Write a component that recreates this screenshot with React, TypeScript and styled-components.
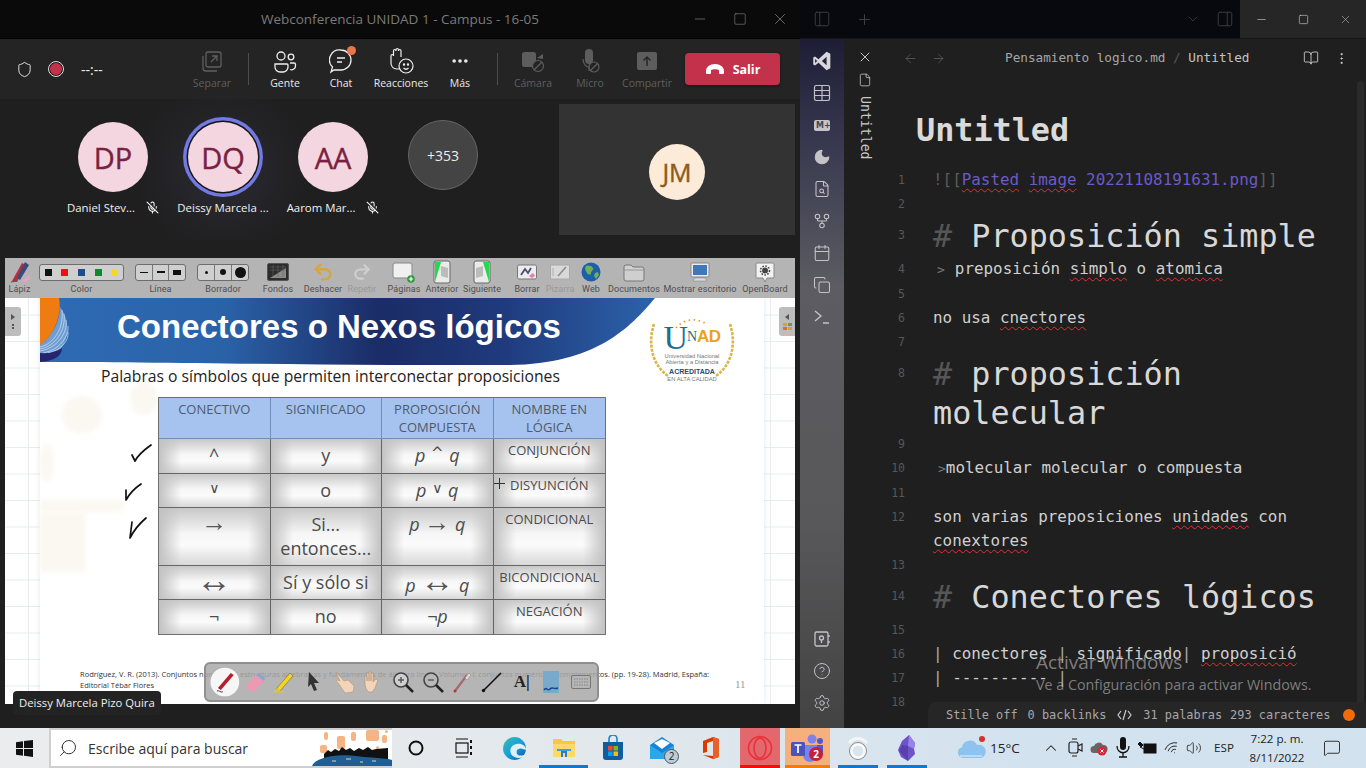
import React from "react";
import styled, { createGlobalStyle } from "styled-components";
import {
  ArrowLeft, ArrowRight, BookOpen, Calendar, ChevronDown, ChevronUp, CircleHelp, Copy, Ellipsis, EllipsisVertical,
  File, FileSearch, GitFork, MicOff, Minus, Moon, PanelLeft, PanelRight, Plus, Search, Settings, Shield,
  Square, Table, Undo2, Redo2, Volume2, Wifi, X, MessageSquare,
} from "lucide-react";

const MONO = `"DejaVu Sans Mono", "Liberation Mono", monospace`;
const SANS = `"Open Sans", "Noto Sans", "Liberation Sans", sans-serif`;

const Global = createGlobalStyle`
  html, body { margin: 0; padding: 0; background: #1f1f1f; overflow: hidden; }
  * { box-sizing: border-box; }
`;

const Screen = styled.div`
  width: 1366px; height: 768px; display: flex; flex-direction: column; overflow: hidden; position: relative;
  font-family: ${SANS};
`;
const Windows = styled.div`display: flex; height: 728px;`;
const Spaced = styled.span<{ $ml?: number; $mt?: number }>`display: flex; flex: none; margin-left: ${(p) => p.$ml ?? 0}px; margin-top: ${(p) => p.$mt ?? 0}px;`;

/* ---------- Teams ---------- */
const Teams = styled.section`width: 800px; display: flex; flex-direction: column; background: #1f1f1f;`;
const TeamsTitle = styled.header`
  height: 39px; flex: none; background: #0a0a0a; position: relative; display: flex; align-items: center; justify-content: center;
  color: #7b7b7b; font-size: 13.5px; border-bottom: 1px solid #000;
`;
const WinControls = styled.div`
  position: absolute; right: 0; top: 0; height: 38px; display: flex; align-items: center; color: #8a8a8a;
`;
const WinControl = styled.span`width: 40px; display: flex; justify-content: center;`;
const MeetBar = styled.div`height: 60px; flex: none; background: #242424; display: flex; align-items: flex-start;`;
const MeetStatus = styled.div`width: 184px; height: 60px; display: flex; align-items: center; padding-left: 16px; color: #eee; font-size: 14px;`;
const RecDot = styled.span`
  width: 16px; height: 16px; border-radius: 50%; background: #c4314b; border: 2px solid #1f1f1f; outline: 1.5px solid #ddd; outline-offset: -1px;
  margin-left: 15px; margin-right: 17px;
`;
const MeetItem = styled.div<{ $w: number; $off?: boolean }>`
  width: ${(p) => p.$w}px; height: 60px; flex: none; display: flex; flex-direction: column; align-items: center; position: relative;
  padding-top: 8px; color: ${(p) => (p.$off ? "#5f5f5f" : "#eaeaea")};
`;
const MeetIcon = styled.div`height: 28px; display: flex; align-items: center; justify-content: center; position: relative;`;
const MeetLabel = styled.span`font-size: 10.5px; line-height: 14px; margin-top: 1px; white-space: nowrap;`;
const MeetDivider = styled.span<{ $before: number; $after: number }>`width: 1px; height: 32px; background: #4d4d4d; margin: 14px ${(p) => p.$after}px 0 ${(p) => p.$before}px; flex: none;`;
const Badge = styled.span`position: absolute; width: 9px; height: 9px; border-radius: 50%; background: #e97548; right: -3px; top: -1px;`;
const Leave = styled.button`
  width: 95px; height: 32px; margin: 14px 0 0 10px; border: 0; border-radius: 4px; background: #c4314b; color: #fff; font: 700 12.5px ${SANS};
  display: flex; align-items: center; justify-content: center; gap: 8px; box-shadow: 0 1px 3px #0006;
`;
const Participants = styled.div`height: 141px; flex: none; display: flex; padding: 5px 5px 5px 58px; background: radial-gradient(circle 90px at 223px 70px, #2a2a34, #1f1f1f);`;
const Person = styled.div`width: 110px; display: flex; flex-direction: column; align-items: center; padding-top: 18px;`;
const Avatar = styled.div<{ $active?: boolean; $more?: boolean }>`
  width: 70px; height: 70px; border-radius: 50%; display: flex; align-items: center; justify-content: center; flex: none;
  background: ${(p) => (p.$more ? "#444" : "#f3d6e0")}; color: ${(p) => (p.$more ? "#eee" : "#7a1f42")};
  font-size: ${(p) => (p.$more ? "14px" : "29px")};
  -webkit-text-stroke: ${(p) => (p.$more ? "0" : ".4px")};
  margin-top: ${(p) => (p.$more ? "-2px" : "0")};
  border: ${(p) => (p.$more ? "1px solid #666" : "0")};
  box-shadow: ${(p) => (p.$active ? "0 0 0 1.5px #151515, 0 0 0 5px #7279e3" : "none")};
`;
const NameRow = styled.div`display: flex; align-items: center; gap: 11px; margin-top: 7px; color: #f2f2f2; font-size: 11.4px; white-space: nowrap; height: 16px;`;
const Tile = styled.div`
  width: 236px; height: 131px; margin-left: 61px; background: #333; display: flex; align-items: center; justify-content: center;
`;
const TileAvatar = styled.div`width: 56px; height: 56px; border-radius: 50%; background: #fcebd8; color: #8e5a20; font-size: 25px; -webkit-text-stroke: .4px; display: flex; align-items: center; justify-content: center; margin-top: 4px;`;

const Share = styled.div`flex: 1; padding: 18px 5px 24px; display: flex; flex-direction: column; position: relative;`;
const BoardBar = styled.div`height: 40px; flex: none; background: #b4b4b4; display: flex; align-items: flex-start; color: #4a4a4a; position: relative;`;
const BoardItem = styled.div<{ $w: number; $off?: boolean; $ml?: number }>`
  width: ${(p) => p.$w}px; flex: none; height: 40px; display: flex; flex-direction: column; align-items: center; color: ${(p) => (p.$off ? "#999" : "#4f4f4f")};
  margin-left: ${(p) => p.$ml ?? 0}px;
`;
const BoardIcon = styled.div`height: 24px; width: 100%; margin-top: 2px; display: flex; align-items: center; justify-content: center;`;
const BoardLabel = styled.span`font: 9px/11px Roboto, ${SANS}; white-space: nowrap; letter-spacing: .1px;`;
const Pill = styled.div`height: 17px; display: flex; align-items: center; border: 1px solid #6d6d6d; border-radius: 3px; background: #cfcfcf; width: 100%;`;
const PillCell = styled.span<{ $line?: boolean }>`flex: 1; height: 100%; display: flex; align-items: center; justify-content: center; border-left: ${(p) => (p.$line ? "1px solid #777" : "0")};`;
const Swatch = styled.i<{ $c: string }>`width: 7px; height: 7px; background: ${(p) => p.$c}; display: block;`;
const Stroke = styled.i<{ $h: number; $w: number }>`width: ${(p) => p.$w}px; height: ${(p) => p.$h}px; background: #111; display: block;`;
const Dot = styled.i<{ $s: number }>`width: ${(p) => p.$s}px; height: ${(p) => p.$s}px; border-radius: 50%; background: #111; display: block;`;

const Stage = styled.div`
  flex: 1; position: relative; padding-left: 35px; overflow: hidden; background-color: #fff;
  background-image: linear-gradient(#e9ecec 1px, transparent 1px), linear-gradient(90deg, #e9ecec 1px, transparent 1px);
  background-size: 26.5px 26.5px; background-position: 23px 16.5px;
`;
const Slide = styled.div`width: 724px; height: 100%; background: #fff; display: flex; flex-direction: column; position: relative; box-shadow: 0 0 5px #b4c2d866;`;
const Banner = styled.div`height: 67px; position: relative; flex: none;`;
const BannerArt = styled.svg`position: absolute; inset: 0; width: 100%; height: 100%;`;
const BannerTitle = styled.h1`
  position: relative; margin: 0; padding: 10px 0 0 77px; color: #fff; font: 700 33px/38px "Liberation Sans", Arial, sans-serif; white-space: nowrap;
`;
const Subtitle = styled.p`margin: 1px 0 0 61px; font-size: 15.7px; line-height: 20px; color: #222; white-space: nowrap; position: relative; z-index: 1;`;
const PropTable = styled.div`
  margin: 11px 0 0 118px; width: 448px; display: grid; grid-template-columns: repeat(4, 1fr); grid-template-rows: 41px 35px 34px 58px 34px 34px;
  border: 1px solid #6f6f6f; flex: none; color: #4b4b4b; position: relative; z-index: 1;
`;
const Head = styled.div`
  background: #a6c3ef; border-right: 1px solid #6f8fb8; border-bottom: 1px solid #6f8fb8; text-align: center; font-size: 13px; line-height: 18px; padding-top: 2px; color: #4f5a6b;
  &:nth-child(4) { border-right: 0; }
`;
const Cell = styled.div<{ $small?: boolean; $italic?: boolean; $last?: boolean }>`
  background: linear-gradient(90deg, #c2c2c2, #e8e8e800 20%, #e8e8e800 80%, #c2c2c2), linear-gradient(180deg, #c8c8c8, #f6f6f6 45%, #fbfbfb 65%, #d8d8d8);
  border-bottom: 1px solid #666; border-right: ${(p) => (p.$last ? "0" : "1px solid #666")};
  text-align: center; font-size: ${(p) => (p.$small ? "13px" : "18px")}; line-height: ${(p) => (p.$small ? "16px" : "24px")};
  padding-top: ${(p) => (p.$small ? "3px" : "4px")}; font-style: ${(p) => (p.$italic ? "italic" : "normal")}; white-space: nowrap;
  &:nth-last-child(-n + 4) { border-bottom: 0; }
`;
const Arrow = styled.span<{ $s: number }>`font: 400 ${(p) => p.$s}px/20px "Liberation Sans", "DejaVu Sans", sans-serif; font-style: normal; color: #555;`;
const Wedge = styled.span<{ $s: number }>`font: 400 ${(p) => p.$s}px/11px "DejaVu Sans", sans-serif; font-style: normal; vertical-align: 4px; margin: 0 1px;`;
const Citation = styled.p`position: absolute; left: 75px; top: 371px; margin: 0; width: 640px; font-size: 7.5px; line-height: 11px; color: #333;`;
const PageNo = styled.span`position: absolute; left: 730px; top: 380px; font: 11px "Liberation Serif", serif; color: #999;`;
const Ink = styled.svg`position: absolute; left: 115px; top: 140px; z-index: 1;`;
const Cursor = styled.svg`position: absolute; left: 489px; top: 180px; z-index: 1;`;
const Fade = styled.div<{ $x: number; $y: number; $w: number; $h: number; $round?: boolean }>`
  position: absolute; left: ${(p) => p.$x}px; top: ${(p) => p.$y}px; width: ${(p) => p.$w}px; height: ${(p) => p.$h}px; background: #fbf8f2;
  border-radius: ${(p) => (p.$round ? "50%" : "0")}; filter: blur(2px);
`;
const SideTab = styled.div<{ $right?: boolean }>`
  position: absolute; top: 9px; ${(p) => (p.$right ? "right: 0;" : "left: 0;")} width: 16px; height: 29px; background: #bdbdbd;
  border-radius: ${(p) => (p.$right ? "3px 0 0 3px" : "0 3px 3px 0")}; display: flex; align-items: center; justify-content: center; z-index: 1;
`;
const Logo = styled.div`position: absolute; left: 643px; top: 20px; width: 88px; height: 64px; text-align: center; color: #444;`;
const LogoArt = styled.svg`position: absolute; inset: 0;`;
const LogoMark = styled.div`position: relative; font: 400 34px/30px "Liberation Serif", serif; color: #1f6e8c; margin-top: 4px; letter-spacing: -1px; white-space: nowrap;`;
const LogoN = styled.span`font-size: 14px; letter-spacing: 0; vertical-align: 8px;`;
const LogoAccent = styled.span`font: 700 17px "Liberation Sans", sans-serif; color: #e9a21b; letter-spacing: -.5px; vertical-align: 7px;`;
const LogoText = styled.div<{ $strong?: boolean; $gap?: boolean }>`
  position: relative; font: ${(p) => (p.$strong ? 700 : 400)} ${(p) => (p.$strong ? 7 : 5.8)}px/6.2px "Liberation Sans", sans-serif; color: ${(p) => (p.$strong ? "#1a4d7a" : "#777")};
  margin-top: ${(p) => (p.$gap ? "4px" : "0")};
`;
const FloatBar = styled.div`
  position: absolute; left: 199px; top: 364px; width: 395px; height: 40px; border-radius: 6px; border: 2px solid #8f8f8f; background: #a8a8a8d9;
  display: flex; align-items: center; padding-left: 4px; z-index: 3;
`;
const FloatTool = styled.span`width: 29.7px; height: 36px; flex: none; display: flex; align-items: center; justify-content: center; font: 700 17px "Liberation Serif", serif; color: #222;`;
const NameTag = styled.div`
  position: absolute; left: 13px; top: 691px; height: 24px; padding: 0 6px; background: #232323; border-radius: 4px; color: #f0f0f0; font-size: 11.3px; line-height: 24px; z-index: 4; white-space: nowrap;
`;

/* ---------- Obsidian ---------- */
const Obsidian = styled.section`width: 566px; display: flex; flex-direction: column; background: #1f1f1f; color: #dcdcdc; position: relative;`;
const ObsTitle = styled.div`height: 39px; flex: none; display: flex; background: #262626; border-bottom: 1px solid #161616;`;
const ObsTabs = styled.div`width: 440px; background: #08080f; display: flex; align-items: center; color: #3e3e48; padding-left: 13px;`;
const ObsCtl = styled.div`flex: 1; display: flex; align-items: center; color: #c8c8c8;`;
const ObsCtlItem = styled.span`width: 42px; display: flex; justify-content: center;`;
const ObsBody = styled.div`flex: 1; display: flex; min-height: 0;`;
const Ribbon = styled.nav`
  width: 44px; flex: none; display: flex; flex-direction: column; align-items: center; padding: 6px 0 9px; color: #c4c4c8;
  background: linear-gradient(180deg, #1d1e35 0%, #36374e 14%, #5c5c62 36%, #58585a 70%, #434343 100%);
`;
const RibbonSlot = styled.span`height: 32px; display: flex; align-items: center; justify-content: center; flex: none;`;
const Md = styled.span`background: #c4c4c8; color: #45454f; border-radius: 2px; font: 700 8px/11px "DejaVu Sans", sans-serif; padding: 0 2px; width: 16px; text-align: center;`;
const RibbonSpacer = styled.span`flex: 1;`;
const TabRail = styled.div`width: 41px; flex: none; display: flex; flex-direction: column; align-items: center; padding-top: 10px; color: #d0d0d0;`;
const VerticalLabel = styled.span`writing-mode: vertical-rl; font: 13.2px/16px ${MONO}; margin-top: 9px; color: #c8c8c8;`;
const Pane = styled.div`flex: 1; min-width: 0; position: relative; overflow: hidden; display: flex; flex-direction: column;`;
const PaneHead = styled.div`height: 38px; flex: none; display: flex; align-items: center; color: #5d5d5d; position: relative; padding-left: 18px;`;
const Crumb = styled.div`font: 12.7px/16px ${MONO}; color: #a6a6a6; margin-left: 59px; white-space: nowrap;`;
const CrumbSep = styled.span`color: #555;`;
const CrumbEnd = styled.span`color: #c4c4c4;`;
const PaneTools = styled.div`margin-left: auto; display: flex; gap: 15px; align-items: center; color: #d0d0d0; padding-right: 17px;`;
const Doc = styled.div`flex: 1; overflow: hidden;`;
const DocTitle = styled.h2`margin: 33px 0 18px 31px; font: 700 31.8px/40px ${MONO}; color: #dadada;`;
const Row = styled.div<{ $heading?: boolean }>`
  display: grid; grid-template-columns: 20px 1fr; column-gap: 28px; width: 460px; padding-right: 10px;
  min-height: ${(p) => (p.$heading ? "41px" : "24px")};
`;
const Gutter = styled.span<{ $heading?: boolean }>`text-align: right; font: 11.5px/${(p) => (p.$heading ? "38.5px" : "24px")} ${MONO}; color: #575757;`;
const LineText = styled.div<{ $heading?: boolean }>`
  font: ${(p) => (p.$heading ? "31.8px/38.5px" : "15.9px/24px")} ${MONO}; color: ${(p) => (p.$heading ? "#d8d8d8" : "#d0d0d0")}; min-width: 0;
  padding-top: ${(p) => (p.$heading ? "1px" : "0")};
`;
const NoWrap = styled.span`white-space: nowrap;`;
const Hash = styled.span`color: #565656;`;
const Muted = styled.span<{ $l: number; $r: number }>`color: #777; margin: 0 ${(p) => p.$r}px 0 ${(p) => p.$l}px; font-size: 13px;`;
const Faint = styled.span`color: #5b5b5b;`;
const Link = styled.span`color: #6a5bc6;`;
const Typo = styled.span`text-decoration: underline wavy #d33; text-decoration-thickness: 1px; text-underline-offset: 3px;`;
const Pipe = styled.span`color: #aaa;`;
const Status = styled.div`
  position: absolute; right: 0; bottom: 0; width: 438px; height: 26px; background: #262626; border-radius: 8px 0 0 0; display: flex; align-items: center;
  padding-left: 18px; font: 11.9px/14px ${MONO}; color: #a8a8a8; white-space: nowrap;
`;
const StatusGap = styled.span<{ $w: number }>`width: ${(p) => p.$w}px; flex: none; display: flex; justify-content: center; color: #ccc;`;
const OrangeDot = styled.i`width: 12px; height: 12px; border-radius: 50%; background: #f26a0a; position: absolute; right: 11px; top: 7px;`;
const Scroll = styled.i`position: absolute; right: 2px; top: 42px; width: 7px; height: 640px; background: #2a2a2a; border-radius: 4px;`;
const Activate = styled.div`position: absolute; left: 1036px; top: 650px; color: #bdbdbd9c; z-index: 5; font-size: 14.3px; line-height: 20px; pointer-events: none;`;
const ActivateBig = styled.div`font-size: 19px; line-height: 24px;  margin-bottom: 1px;`;

/* ---------- Taskbar ---------- */
const Taskbar = styled.footer`height: 40px; flex: none; display: flex; align-items: stretch; background: linear-gradient(90deg, #ebecee 0%, #e2e8ec 45%, #d3e2ef 75%, #d3e2ef 100%); color: #222;`;
const Slot = styled.div<{ $w: number; $ml?: number; $bg?: string; $line?: string }>`
  width: ${(p) => p.$w}px; flex: none; margin-left: ${(p) => p.$ml ?? 0}px; background: ${(p) => p.$bg ?? "transparent"};
  border-bottom: 3px solid ${(p) => p.$line ?? "transparent"}; padding-top: 3px; display: flex; align-items: center; justify-content: center; position: relative;
`;
const SearchBox = styled.div`
  width: 343px; margin-left: 1px; flex: none; background: #fff; border: 2px solid #cfcfcf; border-right: 0; display: flex; align-items: center; padding-left: 7px; position: relative; overflow: hidden;
  font-size: 14px; color: #333; gap: 10px;
`;
const SearchGlass = styled(Search)`transform: scaleX(-1);`;
const SearchArt = styled.svg`position: absolute; right: 0; top: 0;`;
const Weather = styled.div`width: 94px; margin-left: 18px; padding-left: 11px; flex: none; display: flex; align-items: center; gap: 2px; font-size: 13.5px; color: #222;`;
const Clock = styled.div`width: 64px; flex: none; text-align: center; font-size: 11.6px; line-height: 19px; padding-top: 1px; color: #222;`;
const Lang = styled.div`width: 42px; flex: none; text-align: center; font-size: 11.6px; line-height: 40px;`;
const CountBadge = styled.span`position: absolute; right: 7px; bottom: 1px; width: 15px; height: 15px; border-radius: 50%; background: #b9ccd8; border: 1px solid #555; font-size: 10px; line-height: 13px; text-align: center; color: #222;`;
const RedBadge = styled.span`position: absolute; right: 7px; bottom: 4px; width: 14px; height: 14px; border-radius: 50%; background: #c4203b; color: #fff; font: 700 10px/14px ${SANS}; text-align: center;`;
const TiltedWifi = styled(Wifi)`transform: rotate(-30deg);`;

/* ---------- Icon drawings ---------- */
const MeetIcons = {
  separar: (
    <svg width="22" height="24" viewBox="0 0 22 24" fill="none" stroke="#5f5f5f" strokeWidth="1.3"><rect x="5" y="3" width="15" height="15" rx="2" /><path d="M2 7v12a3 3 0 0 0 3 3h11" /><path d="M10 13l6-6M11 7h5v5" /></svg>
  ),
  gente: (
    <svg width="24" height="24" viewBox="0 0 24 24" fill="none" stroke="#eee" strokeWidth="1.3"><circle cx="8" cy="7" r="4" /><circle cx="18" cy="8" r="2.8" /><path d="M2 15h12a1 1 0 0 1 1 1v2a5 5 0 0 1-5 5H7a5 5 0 0 1-5-5z" /><path d="M17 14h4a1.5 1.5 0 0 1 1.5 1.5v1a4 4 0 0 1-5.5 4" /></svg>
  ),
  chat: (
    <svg width="24" height="26" viewBox="0 0 24 26" fill="none" stroke="#eee" strokeWidth="1.3"><path d="M12 2a10 10 0 0 1 0 20H5l-3 2 1.5-5A10 10 0 0 1 12 2z" /><path d="M8 10h8M8 14h5" /></svg>
  ),
  reac: (
    <svg width="28" height="28" viewBox="0 0 28 28" fill="none" stroke="#eee" strokeWidth="1.2"><path d="M4 9v7c0 3 2 6 6 6h2M4 9c0-2 2.500-2 2.500 0V4c0-2 2.500-2 2.500 0v-1c0-2 2.500-2 2.500 0v1c0-2 2.500-2 2.500 0v6" /><circle cx="19" cy="19" r="7" /><circle cx="17" cy="17.500" r=".6" fill="#eee" /><circle cx="21" cy="17.500" r=".6" fill="#eee" /><path d="M16.500 21c1.500 1.500 3.500 1.500 5 0" /></svg>
  ),
  camara: (
    <svg width="24" height="24" viewBox="0 0 24 24" fill="#5d5d5d"><rect x="1" y="3" width="14" height="15" rx="2.500" /><path d="M16 9l6-4v5z" /><circle cx="17" cy="17" r="5.500" fill="#242424" stroke="#5d5d5d" strokeWidth="1.2" /><path d="M13 21l8-8" stroke="#5d5d5d" strokeWidth="1.2" /></svg>
  ),
  micro: (
    <svg width="24" height="26" viewBox="0 0 24 26" fill="#5d5d5d"><rect x="7" y="1" width="8" height="15" rx="4" /><path d="M5 11c0 5 3 8 6 8v4" fill="none" stroke="#5d5d5d" strokeWidth="1.2" /><circle cx="16" cy="19" r="5" fill="#242424" stroke="#5d5d5d" strokeWidth="1.2" /><path d="M12.500 22.500l7-7" stroke="#5d5d5d" strokeWidth="1.2" /></svg>
  ),
  compartir: (
    <svg width="22" height="22" viewBox="0 0 22 22"><rect x="1" y="2" width="20" height="18" rx="2" fill="#5d5d5d" /><path d="M11 16V7M7.500 10.500L11 7l3.500 3.500" fill="none" stroke="#242424" strokeWidth="1.4" /></svg>
  ),
};

const Vscode = () => (
  <svg width="20" height="20" viewBox="0 0 24 24" fill="#d8d8dc"><path d="M17.500 1L22 3.200v17.600L17.500 23 7.800 14.200 3.600 17.500 1.500 16.300V7.700L3.600 6.500l4.200 3.300zM17.500 7l-5.600 5 5.600 5zM3.700 9.500v5l2.500-2.500z" /></svg>
);

const board = {
  pen: (<svg width="24" height="24" viewBox="0 0 24 24"><path d="M4 21L14 3l4 2-9 17z" fill="#b03040" /><path d="M9 18L17 2l4 3-9 15z" fill="#3a4a7a" /><path d="M14 21l7-6 1 4-5 3z" fill="#e7a3c4" /><path d="M3 22l6-1" stroke="#555" /></svg>),
  fondos: (<svg width="22" height="18" viewBox="0 0 22 18"><rect x=".5" y=".5" width="21" height="17" rx="1.500" fill="#2d2d2d" stroke="#555" /><path d="M3 15L19 5v10z" fill="#8b8b8b" /><path d="M3 4h16M3 7h16M6 2v12M11 2v12M16 2v12" stroke="#666" strokeWidth=".6" /></svg>),
  paginas: (<svg width="24" height="22" viewBox="0 0 24 22"><rect x="1" y="2" width="19" height="15" rx="2" fill="#f0f0f0" stroke="#888" /><circle cx="19" cy="18" r="3.800" fill="#2d9a3d" /><path d="M19 15.800v4.400M16.800 18h4.400" stroke="#fff" strokeWidth="1.200" /></svg>),
  anterior: (<svg width="18" height="24" viewBox="0 0 18 24"><rect x="1" y="1" width="16" height="22" rx="2" fill="#e9ece9" stroke="#666" /><path d="M2 2h6L2 22z" fill="#28d84a" /><path d="M8 6l7 2v10l-7-2z" fill="#bcbcbc" /></svg>),
  siguiente: (<svg width="18" height="24" viewBox="0 0 18 24"><rect x="1" y="1" width="16" height="22" rx="2" fill="#e9ece9" stroke="#666" /><path d="M16 2h-6l6 20z" fill="#28d84a" /><path d="M10 6L3 8v10l7-2z" fill="#bcbcbc" /></svg>),
  borrar: (<svg width="20" height="16" viewBox="0 0 20 16"><rect x=".5" y="1" width="19" height="14" rx="1.500" fill="#ececec" stroke="#777" /><path d="M4 11l4-6 3 4 3-5" stroke="#45506f" strokeWidth="1.800" fill="none" /><path d="M12 12l4-3 2 3-3 2z" fill="#e67fa4" /></svg>),
  pizarra: (<svg width="20" height="16" viewBox="0 0 20 16"><rect x=".5" y="1" width="19" height="14" fill="#d9d9d9" stroke="#aaa" /><path d="M8 12L16 3" stroke="#8a8a8a" strokeWidth="1.500" /><path d="M3 4v8" stroke="#b0b0b0" /></svg>),
  web: (<svg width="20" height="20" viewBox="0 0 20 20"><circle cx="10" cy="10" r="9.500" fill="#1d5fa8" /><path d="M5 4c3-1 6 0 7 2s-2 3-2 5-3 2-4 0-3-4-1-7zM14 11l3-1 1 3-3 4-2-3z" fill="#6fae5a" /></svg>),
  docs: (<svg width="22" height="19" viewBox="0 0 22 19"><path d="M1 4a2 2 0 0 1 2-2h5l2 2h9a2 2 0 0 1 2 2v10a2 2 0 0 1-2 2H3a2 2 0 0 1-2-2z" fill="#cfcfcf" stroke="#777" /><path d="M1 7h20" stroke="#999" /></svg>),
  desk: (<svg width="20" height="20" viewBox="0 0 20 20"><rect x="1" y="1" width="18" height="14" rx="1" fill="#ececec" stroke="#888" /><rect x="3" y="3" width="14" height="10" fill="#3e78b8" /><path d="M5 16h10l2 3H3z" fill="#ddd" stroke="#888" strokeWidth=".6" /></svg>),
  ob: (<svg width="20" height="21" viewBox="0 0 20 21"><path d="M2 1h16a1 1 0 0 1 1 1v13a1 1 0 0 1-1 1h-6l-2 4-2-4H2a1 1 0 0 1-1-1V2a1 1 0 0 1 1-1z" fill="#f2f2f2" stroke="#888" /><circle cx="10" cy="8.500" r="3" fill="#444" /><circle cx="10" cy="8.500" r="4.500" fill="none" stroke="#444" strokeWidth="1.500" strokeDasharray="1.500 1.500" /></svg>),
};

const floatIcons: React.ReactNode[] = [
  <svg key="a" width="30" height="30" viewBox="0 0 30 30"><circle cx="15" cy="15" r="14.500" fill="#f6f6f6" /><path d="M8 21L21 6l3 2L11 23z" fill="#b81d2a" /><path d="M7 24c3-1 3 2 6 1" stroke="#444" fill="none" /></svg>,
  <svg key="b" width="24" height="24" viewBox="0 0 24 24"><path d="M3 16l10-11 8 6-9 10-7-1z" fill="#ec9ab4" /><path d="M13 5l4-2 5 5-1 3z" fill="#87a7d2" /></svg>,
  <svg key="c" width="26" height="26" viewBox="0 0 26 26"><path d="M5 20L19 4l3 3L9 22z" fill="#f2d51d" stroke="#555" strokeWidth=".5" /><path d="M2 24l4-5 4 3 6 1z" fill="#d7c34a" /></svg>,
  <svg key="d" width="16" height="22" viewBox="0 0 16 22"><path d="M3 1l10 11H8l3 7-3 1-3-7-3 3z" fill="#333" /></svg>,
  <svg key="e" width="26" height="26" viewBox="0 0 26 26"><path d="M5 3l8 9 4-1 6 6-1 6-8 1-6-9-3-3 1-1 3 1z" fill="#f2d5b8" stroke="#b58e6a" strokeWidth=".5" /></svg>,
  <svg key="f" width="24" height="26" viewBox="0 0 24 26"><path d="M4 14V7h2v5-8h2v8-9h2v9-8h2v9l3-3 2 1-3 8-3 4H8c-2-1-4-5-4-9z" fill="#f2d5b8" stroke="#a78464" strokeWidth=".5" /></svg>,
  <svg key="g" width="24" height="24" viewBox="0 0 24 24" fill="none"><circle cx="10" cy="10" r="7" stroke="#444" strokeWidth="1.600" fill="#cfcfcf" /><path d="M15 15l7 7" stroke="#222" strokeWidth="2.500" /><path d="M10 7v6M7 10h6" stroke="#555" strokeWidth="1.400" /></svg>,
  <svg key="h" width="24" height="24" viewBox="0 0 24 24" fill="none"><circle cx="10" cy="10" r="7" stroke="#444" strokeWidth="1.600" fill="#b8b8b8" /><path d="M15 15l7 7" stroke="#222" strokeWidth="2.500" /><path d="M7 10h6" stroke="#555" strokeWidth="1.400" /></svg>,
  <svg key="i" width="22" height="24" viewBox="0 0 22 24"><path d="M4 21L16 5" stroke="#a56a6a" strokeWidth="2.200" /><path d="M14 8l4-5 2 2-4 5z" fill="#ddd" stroke="#888" strokeWidth=".6" /><circle cx="4" cy="21" r="1.500" fill="#b33" /></svg>,
  <svg key="j" width="24" height="24" viewBox="0 0 24 24"><path d="M3 21L21 3" stroke="#111" strokeWidth="1.600" /><circle cx="3.500" cy="20.500" r="1.700" fill="#111" /></svg>,
  <React.Fragment key="k">A|</React.Fragment>,
  <svg key="l" width="18" height="24" viewBox="0 0 18 24"><rect x="1" y="1" width="16" height="22" fill="#79aacb" /><path d="M2 20c3-4 3 2 6-1s3 1 8-1" stroke="#1b3f9a" strokeWidth="1.500" fill="none" /></svg>,
  <svg key="m" width="20" height="14" viewBox="0 0 20 14"><rect x=".5" y=".5" width="19" height="13" rx="1.500" fill="#b5b5b5" stroke="#777" /><path d="M3 4h14M3 7h14M3 10h14" stroke="#888" strokeDasharray="1.500 1" /></svg>,
];

const Edge = () => (
  <svg width="25" height="25" viewBox="0 0 24 24"><defs><linearGradient id="ed" x1="0" y1="0" x2="1" y2="1"><stop offset="0" stopColor="#35c1a0" /><stop offset=".5" stopColor="#1b9de2" /><stop offset="1" stopColor="#0c59a4" /></linearGradient></defs><circle cx="12" cy="12" r="11" fill="url(#ed)" /><path d="M23 13c0-3-3-5.500-7-5.500S8 10 8 14c0 4 3 7 8 7 3 0 5-1 6-3-2 1-8 2-8-3 0-2 2-3 4-3s5 2 5 1z" fill="#e8f6f4" opacity=".95" /></svg>
);
const Office = () => (
  <svg width="20" height="24" viewBox="0 0 20 24"><path d="M2 5l10-4 6 2v18l-6 2-10-4 10 1V5l-6 2v9l-4 1z" fill="#d83b01" /><path d="M12 1l6 2v18l-6 2z" fill="#eb5f2a" /></svg>
);
const Files = () => (
  <svg width="24" height="22" viewBox="0 0 24 22"><path d="M1 2h8l2 2h12v16H1z" fill="#f7c745" /><path d="M1 7h22v13H1z" fill="#fcd96a" /><path d="M9 13h6v7h-2v-4h-2v4H9z" fill="#2a7ed2" /><path d="M5 12h14v2H5z" fill="#39a0e5" /></svg>
);
const Store = () => (
  <svg width="24" height="26" viewBox="0 0 24 26"><path d="M8 8V4a4 4 0 0 1 8 0v4" fill="none" stroke="#1e80c8" strokeWidth="1.600" /><path d="M2 7h20v15a3 3 0 0 1-3 3H5a3 3 0 0 1-3-3z" fill="#0f5c9e" /><rect x="7" y="11" width="4.500" height="4.500" fill="#e74d2f" /><rect x="12.500" y="11" width="4.500" height="4.500" fill="#7fba00" /><rect x="7" y="16.500" width="4.500" height="4.500" fill="#00a4ef" /><rect x="12.500" y="16.500" width="4.500" height="4.500" fill="#ffb900" /></svg>
);
const Mail = () => (
  <svg width="26" height="24" viewBox="0 0 26 24"><path d="M1 9L13 1l12 8v14H1z" fill="#1683d8" /><path d="M5 7l8-4 8 4-8 6z" fill="#fff" /><path d="M1 9l12 8 12-8v14H1z" fill="#29a7ea" /></svg>
);
const Opera = () => (
  <svg width="26" height="26" viewBox="0 0 26 26" fill="none" stroke="#ed2f37" strokeWidth="1.600"><circle cx="13" cy="13" r="11.500" /><ellipse cx="13" cy="13" rx="6" ry="10" /></svg>
);
const TeamsLogo = () => (
  <svg width="34" height="28" viewBox="0 0 34 28"><circle cx="21" cy="5" r="4.500" fill="#7b83eb" /><circle cx="29" cy="7" r="3" fill="#5059c9" /><path d="M24 11h8v8a5 5 0 0 1-8 3z" fill="#5059c9" /><path d="M12 11h14v10a7 7 0 0 1-14 0z" fill="#7b83eb" /><rect x="0" y="8" width="14" height="14" rx="1.500" fill="#4b53bc" /><path d="M3.500 11h7M7 11v8" stroke="#fff" strokeWidth="1.700" /></svg>
);
const RingApp = () => (
  <svg width="24" height="26" viewBox="0 0 24 26" fill="none"><circle cx="12" cy="16" r="8.500" strokeWidth="1" stroke="#8a8a8a" /><circle cx="12" cy="16" r="6.500" strokeWidth="2.500" stroke="#fafafa" /><path d="M3 8c5-6 13-6 18 0" strokeWidth="3" stroke="#f4f4f4" /></svg>
);
const ObsidianGem = () => (
  <svg width="20" height="28" viewBox="0 0 20 28"><path d="M12 1l6 8-1 6 1 5-7 7-7-4-3-7 4-9z" fill="#6d52c8" /><path d="M12 1l-1 11 6 3 1-6z" fill="#9a83e8" /><path d="M11 12l-6-1-3 6 9 10z" fill="#5a40ad" /></svg>
);
const WeatherIcon = () => (
  <svg width="32" height="28" viewBox="0 0 32 28"><path d="M7 24a5.500 5.500 0 0 1-1-10.800A8 8 0 0 1 21 11a6.500 6.500 0 0 1 4 13z" fill="#8dc3ee" /><path d="M4 22h22" stroke="#d8ecfa" strokeWidth="1.200" /><circle cx="26" cy="5" r="3" fill="#d3302f" /></svg>
);

const Checks = () => (
  <Ink width="50" height="105" viewBox="0 0 50 105" fill="none" stroke="#111" strokeWidth="1.700" strokeLinecap="round" strokeLinejoin="round">
    <path d="M12 17L15 23C18 17 24 12 31 7" />
    <path d="M6 52L6 62C10 55 15 50 21 46" />
    <path d="M12 84L10 100C14 92 19 86 26 80" />
  </Ink>
);

const Hangup = () => (
  <svg width="20" height="12" viewBox="0 0 20 12"><path d="M1 8c0-4 4-7 9-7s9 3 9 7v2a1 1 0 0 1-1 1h-3a1 1 0 0 1-1-1V7c-2-1-6-1-8 0v3a1 1 0 0 1-1 1H2a1 1 0 0 1-1-1z" fill="#fff" /></svg>
);

const boardItems: [string, number, React.ReactNode, boolean?][] = [
  ["Fondos", 44, board.fondos],
  ["Deshacer", 46, <Undo2 key="u" size={22} color="#d8a53c" strokeWidth={2.6} />],
  ["Repetir", 32, <Redo2 key="r" size={20} color="#cfcfcf" strokeWidth={2.6} />, true],
  ["Páginas", 52, board.paginas],
  ["Anterior", 24, board.anterior],
  ["Siguiente", 56, board.siguiente],
  ["Borrar", 34, board.borrar],
  ["Pizarra", 32, board.pizarra, true],
  ["Web", 30, board.web],
  ["Documentos", 56, board.docs],
  ["Mostrar escritorio", 76, board.desk],
  ["OpenBoard", 54, board.ob],
];

const tableRows: [React.ReactNode, React.ReactNode, React.ReactNode, string][] = [
  ["^", "y", <>p <Wedge $s={15}>^</Wedge> q</>, "CONJUNCIÓN"],
  [<Wedge key="v" $s={14}>∨</Wedge>, "o", <>p <Wedge $s={14}>∨</Wedge> q</>, "DISYUNCIÓN"],
  [<Arrow key="a" $s={26}>→</Arrow>, <>Si...<br />entonces...</>, <>p <Arrow $s={26}>→</Arrow> q</>, "CONDICIONAL"],
  [<Arrow key="b" $s={36}>↔</Arrow>, "Sí y sólo si", <>p <Arrow $s={34}>↔</Arrow> q</>, "BICONDICIONAL"],
  ["¬", "no", "¬p", "NEGACIÓN"],
];

const ribbonTop: React.ReactNode[] = [
  <Vscode key="1" />, <Table key="2" size={20} strokeWidth={1.4} />, <Md key="3">M+</Md>,
  <Moon key="4" size={18} fill="#c4c4c8" strokeWidth={1.4} />, <FileSearch key="5" size={18} strokeWidth={1.4} />,
  <GitFork key="6" size={18} strokeWidth={1.4} />, <Calendar key="7" size={18} strokeWidth={1.4} />, <Copy key="8" size={18} strokeWidth={1.4} />,
  <svg key="9" width="18" height="18" viewBox="0 0 18 18" fill="none" stroke="currentColor" strokeWidth="1.400"><path d="M2 3l6 5-6 5M10 15h6" /></svg>,
];

const lanterns = [[12, 2, 4, 8], [25, 6, 8, 13], [39, 2, 5, 9], [54, 0, 13, 11], [70, 5, 5, 8], [8, 15, 7, 8], [64, 16, 3, 4], [73, 0, 3, 3]];

export default function App() {
  return (
    <Screen>
      <Global />
      <Windows>
        <Teams>
          <TeamsTitle>
            Webconferencia UNIDAD 1 - Campus - 16-05
            <WinControls>
              <WinControl><Minus size={16} strokeWidth={1} /></WinControl>
              <WinControl><Square size={14} strokeWidth={1} /></WinControl>
              <WinControl><X size={18} strokeWidth={1} /></WinControl>
            </WinControls>
          </TeamsTitle>
          <MeetBar>
            <MeetStatus>
              <Shield size={17} strokeWidth={1.3} />
              <RecDot />
              --:--
            </MeetStatus>
            <MeetItem $w={56} $off><MeetIcon>{MeetIcons.separar}</MeetIcon><MeetLabel>Separar</MeetLabel></MeetItem>
            <MeetDivider $before={8} $after={8} />
            <MeetItem $w={56}><MeetIcon>{MeetIcons.gente}</MeetIcon><MeetLabel>Gente</MeetLabel></MeetItem>
            <MeetItem $w={56}><MeetIcon>{MeetIcons.chat}<Badge /></MeetIcon><MeetLabel>Chat</MeetLabel></MeetItem>
            <MeetItem $w={64}><MeetIcon>{MeetIcons.reac}</MeetIcon><MeetLabel>Reacciones</MeetLabel></MeetItem>
            <MeetItem $w={54}><MeetIcon><Ellipsis size={20} strokeWidth={2.4} /></MeetIcon><MeetLabel>Más</MeetLabel></MeetItem>
            <MeetDivider $before={10} $after={7} />
            <MeetItem $w={56} $off><MeetIcon>{MeetIcons.camara}</MeetIcon><MeetLabel>Cámara</MeetLabel></MeetItem>
            <MeetItem $w={58} $off><MeetIcon>{MeetIcons.micro}</MeetIcon><MeetLabel>Micro</MeetLabel></MeetItem>
            <MeetItem $w={56} $off><MeetIcon>{MeetIcons.compartir}</MeetIcon><MeetLabel>Compartir</MeetLabel></MeetItem>
            <Leave><Hangup />Salir</Leave>
          </MeetBar>
          <Participants>
            <Person><Avatar>DP</Avatar><NameRow>Daniel Stev...<MicOff size={13} /></NameRow></Person>
            <Person><Avatar $active>DQ</Avatar><NameRow>Deissy Marcela ...</NameRow></Person>
            <Person><Avatar>AA</Avatar><NameRow>Aarom Mar...<MicOff size={13} /></NameRow></Person>
            <Person><Avatar $more>+353</Avatar></Person>
            <Tile><TileAvatar>JM</TileAvatar></Tile>
          </Participants>
          <Share>
            <BoardBar>
              <BoardItem $w={29}><BoardIcon>{board.pen}</BoardIcon><BoardLabel>Lápiz</BoardLabel></BoardItem>
              <BoardItem $w={85} $ml={5}>
                <BoardIcon><Pill>{["#111", "#e11", "#1a4f8a", "#12882a", "#f4dc1a"].map((c) => <PillCell key={c}><Swatch $c={c} /></PillCell>)}</Pill></BoardIcon>
                <BoardLabel>Color</BoardLabel>
              </BoardItem>
              <BoardItem $w={51} $ml={11}>
                <BoardIcon><Pill>{[[8, 1], [8, 2], [8, 5]].map(([w, h], i) => <PillCell key={i} $line={i > 0}><Stroke $w={w} $h={h} /></PillCell>)}</Pill></BoardIcon>
                <BoardLabel>Línea</BoardLabel>
              </BoardItem>
              <BoardItem $w={52} $ml={11}>
                <BoardIcon><Pill>{[3, 6, 11].map((s, i) => <PillCell key={s} $line={i > 0}><Dot $s={s} /></PillCell>)}</Pill></BoardIcon>
                <BoardLabel>Borrador</BoardLabel>
              </BoardItem>
              {boardItems.map(([label, w, icon, off], i) => (
                <BoardItem key={label} $w={w} $off={off} $ml={i === 0 ? 7 : 0}><BoardIcon>{icon}</BoardIcon><BoardLabel>{label}</BoardLabel></BoardItem>
              ))}
            </BoardBar>
            <Stage>
              <Slide>
                <Banner>
                  <BannerArt viewBox="0 0 724 67" preserveAspectRatio="none">
                    <defs>
                      <linearGradient id="bn" x1="0" y1="0" x2="1" y2="0">
                        <stop offset="0" stopColor="#2e6bb4" /><stop offset=".3" stopColor="#2a62a8" /><stop offset=".55" stopColor="#1b2c66" /><stop offset=".75" stopColor="#1f3a7c" /><stop offset="1" stopColor="#2c62aa" />
                      </linearGradient>
                    </defs>
                    <path d="M0 0H615C590 30 555 66 470 67C300 68 120 64 0 64Z" fill="url(#bn)" />
                    <path d="M19 8C30 20 30 40 20 52C14 56 6 56 0 55L0 47C16 36 22 14 19 8Z" fill="#6f9ed2" />
                    <path d="M0 49C14 46 24 30 22 12M0 51C16 48 26 32 24 16M0 53C18 50 28 34 26 22M3 55C20 52 29 38 28 28M8 55C22 52 29 42 28 34" stroke="#e8eef7" strokeWidth=".6" fill="none" />
                    <path d="M0 0H19C22 14 16 36 0 47Z" fill="#ef7b13" />
                    <path d="M0 55C8 56 16 54 22 50C22 58 14 63 0 64Z" fill="#26246e" />
                  </BannerArt>
                  <BannerTitle>Conectores o Nexos lógicos</BannerTitle>
                </Banner>
                <Subtitle>Palabras o símbolos que permiten interconectar proposiciones</Subtitle>
                <PropTable>
                  <Head>CONECTIVO</Head>
                  <Head>SIGNIFICADO</Head>
                  <Head>PROPOSICIÓN COMPUESTA</Head>
                  <Head>NOMBRE EN LÓGICA</Head>
                  {tableRows.map((r, i) => (
                    <React.Fragment key={i}>
                      <Cell>{r[0]}</Cell>
                      <Cell>{r[1]}</Cell>
                      <Cell $italic>{r[2]}</Cell>
                      <Cell $small $last>{r[3]}</Cell>
                    </React.Fragment>
                  ))}
                </PropTable>
              </Slide>
              <Fade $round $x={57} $y={98} $w={40} $h={38} />
              <Fade $round $x={125} $y={83} $w={28} $h={34} />
              <Fade $round $x={35} $y={146} $w={14} $h={38} />
              <Fade $x={35} $y={202} $w={83} $h={12} />
              <Fade $x={35} $y={214} $w={45} $h={60} />
              <Logo>
                <LogoArt width="88" height="64" viewBox="0 0 88 64" fill="none" stroke="#d9b64a" strokeWidth="2.600" strokeDasharray="3 1.200">
                  <path d="M6 6c-6 18-3 40 14 52" />
                  <path d="M82 6c6 18 3 40-14 52" />
                  <path d="M28 10a22 22 0 0 1 30-4" stroke="#e8a020" strokeWidth="1.800" strokeDasharray="1.500 3.500" />
                </LogoArt>
                <LogoMark>U<LogoN>N</LogoN><LogoAccent>AD</LogoAccent></LogoMark>
                <LogoText>Universidad Nacional</LogoText>
                <LogoText>Abierta y a Distancia</LogoText>
                <LogoText $strong $gap>ACREDITADA</LogoText>
                <LogoText>EN ALTA CALIDAD</LogoText>
              </Logo>
              <Checks />
              <Cursor width="11" height="11" viewBox="0 0 11 11"><path d="M5.500 0v11M0 5.500h11" stroke="#333" /></Cursor>
              <SideTab><svg width="8" height="18" viewBox="0 0 8 18" fill="#555"><path d="M2 1l4 3-4 3zM3 11h2v2H3zM3 14h2v2H3z" /></svg></SideTab>
              <SideTab $right><svg width="11" height="18" viewBox="0 0 11 18"><path d="M7 1L3 4l4 3z" fill="#555" /><rect x="1" y="10" width="4" height="3" fill="#d8a030" /><rect x="6" y="10" width="4" height="3" fill="#5aa060" /><rect x="1" y="14" width="4" height="3" fill="#d87030" /><rect x="6" y="14" width="4" height="3" fill="#d8a030" /></svg></SideTab>
              <Citation>Rodríguez, V. R. (2013). Conjuntos numéricos, estructuras algebraicas y fundamentos de álgebra lineal. Volumen I: conjuntos numéricos, complementos. (pp. 19-28). Madrid, España: Editorial Tébar Flores</Citation>
              <PageNo>11</PageNo>
              <FloatBar>{floatIcons.map((ic, i) => <FloatTool key={i}>{ic}</FloatTool>)}</FloatBar>
            </Stage>
          </Share>
          <NameTag>Deissy Marcela Pizo Quira</NameTag>
        </Teams>

        <Obsidian>
          <ObsTitle>
            <ObsTabs>
              <PanelLeft size={18} strokeWidth={1.2} />
              <Spaced $ml={25}><Plus size={17} strokeWidth={1.4} /></Spaced>
              <Spaced $ml={312}><ChevronDown size={16} strokeWidth={1.2} /></Spaced>
              <Spaced $ml={15}><PanelRight size={18} strokeWidth={1.2} /></Spaced>
            </ObsTabs>
            <ObsCtl>
              <ObsCtlItem><Minus size={13} strokeWidth={1.2} /></ObsCtlItem>
              <ObsCtlItem><Square size={11} strokeWidth={1.4} /></ObsCtlItem>
              <ObsCtlItem><X size={13} strokeWidth={1} /></ObsCtlItem>
            </ObsCtl>
          </ObsTitle>
          <ObsBody>
            <Ribbon>
              {ribbonTop.map((ic, i) => <RibbonSlot key={i}>{ic}</RibbonSlot>)}
              <RibbonSpacer />
              <RibbonSlot>
                <svg width="18" height="18" viewBox="0 0 18 18" fill="none" stroke="currentColor" strokeWidth="1.300"><rect x="2" y="2" width="13" height="14" rx="1.500" /><circle cx="8.500" cy="8" r="2" /><path d="M8.500 10v3M16 5v2M16 11v2" /></svg>
              </RibbonSlot>
              <RibbonSlot><CircleHelp size={18} strokeWidth={1.3} /></RibbonSlot>
              <RibbonSlot><Settings size={18} strokeWidth={1.3} /></RibbonSlot>
            </Ribbon>
            <TabRail>
              <X size={16} strokeWidth={1.4} />
              <Spaced $mt={8}><File size={14} strokeWidth={1.3} /></Spaced>
              <VerticalLabel>Untitled</VerticalLabel>
            </TabRail>
            <Pane>
              <PaneHead>
                <ArrowLeft size={15} strokeWidth={1.3} />
                <Spaced $ml={13}><ArrowRight size={15} strokeWidth={1.3} /></Spaced>
                <Crumb>Pensamiento logico.md <CrumbSep>/</CrumbSep> <CrumbEnd>Untitled</CrumbEnd></Crumb>
                <PaneTools><BookOpen size={16} strokeWidth={1.3} /><EllipsisVertical size={15} strokeWidth={1.6} /></PaneTools>
              </PaneHead>
              <Scroll />
              <Doc>
                <DocTitle>Untitled</DocTitle>
                <Row><Gutter>1</Gutter><LineText><NoWrap><Faint>![[</Faint><Link><Typo>Pasted</Typo> <Typo>image</Typo> 20221108191631.png</Link><Faint>]]</Faint></NoWrap></LineText></Row>
                <Row><Gutter>2</Gutter><LineText /></Row>
                <Row $heading><Gutter $heading>3</Gutter><LineText $heading><NoWrap><Hash>#</Hash> Proposición simple</NoWrap></LineText></Row>
                <Row><Gutter>4</Gutter><LineText><Muted $l={4} $r={10}>&gt;</Muted>preposición <Typo>simplo</Typo> o <Typo>atomica</Typo></LineText></Row>
                <Row><Gutter>5</Gutter><LineText /></Row>
                <Row><Gutter>6</Gutter><LineText>no usa <Typo>cnectores</Typo></LineText></Row>
                <Row><Gutter>7</Gutter><LineText /></Row>
                <Row $heading><Gutter $heading>8</Gutter><LineText $heading><Hash>#</Hash> proposición molecular</LineText></Row>
                <Row><Gutter>9</Gutter><LineText /></Row>
                <Row><Gutter>10</Gutter><LineText><Muted $l={5} $r={0}>&gt;</Muted>molecular molecular o compuesta</LineText></Row>
                <Row><Gutter>11</Gutter><LineText /></Row>
                <Row><Gutter>12</Gutter><LineText>son varias preposiciones <Typo>unidades</Typo> con <Typo>conextores</Typo></LineText></Row>
                <Row><Gutter>13</Gutter><LineText /></Row>
                <Row $heading><Gutter $heading>14</Gutter><LineText $heading><NoWrap><Hash>#</Hash> Conectores lógicos</NoWrap></LineText></Row>
                <Row><Gutter>15</Gutter><LineText /></Row>
                <Row><Gutter>16</Gutter><LineText><NoWrap><Pipe>|</Pipe> conectores <Pipe>|</Pipe> significado<Pipe>|</Pipe> <Typo>proposició</Typo></NoWrap></LineText></Row>
                <Row><Gutter>17</Gutter><LineText><NoWrap><Pipe>|</Pipe> ---------- <Pipe>|</Pipe></NoWrap></LineText></Row>
                <Row><Gutter>18</Gutter><LineText /></Row>
              </Doc>
              <Status>
                Stille off
                <StatusGap $w={10} />0 backlinks
                <StatusGap $w={37}>
                  <svg width="15" height="12" viewBox="0 0 15 12" fill="none" stroke="currentColor" strokeWidth="1.200"><path d="M4 2L1 6l3 4M11 2l3 4-3 4M9 1L6 11" /></svg>
                </StatusGap>
                31 palabras
                <StatusGap $w={8} />293 caracteres
                <OrangeDot />
              </Status>
            </Pane>
          </ObsBody>
        </Obsidian>
      </Windows>

      <Activate>
        <ActivateBig>Activar Windows</ActivateBig>
        Ve a Configuración para activar Windows.
      </Activate>

      <Taskbar>
        <Slot $w={48}>
          <svg width="17" height="17" viewBox="0 0 17 17" fill="#111"><path d="M0 2.300L7 1.300V8H0zM8 1.100L17 0v8H8zM0 9h7v6.700l-7-1zM8 9h9v8l-9-1.200z" /></svg>
        </Slot>
        <SearchBox>
          <SearchGlass size={20} strokeWidth={1.2} />
          <span>Escribe aquí para buscar</span>
          <SearchArt width="80" height="36" viewBox="0 0 80 36">
            <rect width="80" height="36" fill="#fff" />
            {lanterns.map(([x, y, w, h], i) => (
              <rect key={i} x={x} y={y} width={w} height={h} rx="2" fill="#f6b484" />
            ))}
            <path d="M12 24l4-4 3 2 4-3 4 2 3-4 4 3 4-2 4 3 5-3 4 2 5-3 4 3 4-1 12-1v12H12z" fill="#111" />
            <path d="M0 36C4 26 30 24 44 26C60 28 74 28 80 30V36Z" fill="#1f5f96" />
            <path d="M20 31h4M34 29h5M48 32h3M60 31h4" stroke="#e8d89a" />
          </SearchArt>
        </SearchBox>
        <Slot $w={48}><svg width="16" height="16" viewBox="0 0 16 16" fill="none" stroke="#111" strokeWidth="2"><circle cx="8" cy="8" r="6.500" /></svg></Slot>
        <Slot $w={48}><svg width="20" height="20" viewBox="0 0 20 20" fill="none" stroke="#111" strokeWidth="1.200"><path d="M2 1h12M2 19h12" /><rect x="2" y="5" width="12" height="10" /><path d="M17 2v3M17 8v3M17 14v3" strokeWidth="2" /></svg></Slot>
        <Slot $w={49} $ml={2}><Edge /></Slot>
        <Slot $w={49} $line="#0f78d4"><Files /></Slot>
        <Slot $w={49}><Store /></Slot>
        <Slot $w={49}><Mail /><CountBadge>2</CountBadge></Slot>
        <Slot $w={49}><Office /></Slot>
        <Slot $w={40} $ml={5} $bg="#e3686e" $line="#f80a0a"><Opera /></Slot>
        <Slot $w={45} $ml={5} $bg="#f5b07c" $line="#f57c00"><TeamsLogo /><RedBadge>2</RedBadge></Slot>
        <Slot $w={40} $ml={8} $line="#0f78d4"><RingApp /></Slot>
        <Slot $w={40} $ml={9} $line="#0f78d4"><ObsidianGem /></Slot>
        <Weather><WeatherIcon />15°C</Weather>
        <Slot $w={24}><ChevronUp size={18} strokeWidth={1.4} /></Slot>
        <Slot $w={24}><svg width="16" height="20" viewBox="0 0 16 20" fill="none" stroke="#222" strokeWidth="1.200"><rect x="2" y="4" width="9" height="11" rx="2" /><path d="M11 8l4-2v7l-4-2M5 1h5M5 18h5" /></svg></Slot>
        <Slot $w={24}><svg width="18" height="16" viewBox="0 0 18 16"><path d="M4 13a3.500 3.500 0 0 1 0-7 5 5 0 0 1 9-1 4 4 0 0 1 1 8z" fill="#666" /><circle cx="12" cy="11" r="4.500" fill="#d9263a" /><path d="M10.500 9.500l3 3M13.500 9.500l-3 3" stroke="#fff" /></svg></Slot>
        <Slot $w={23}><svg width="14" height="22" viewBox="0 0 14 22" fill="#111"><rect x="4" y="0" width="6" height="13" rx="3" /><path d="M1 9c0 9 12 9 12 0M7 16v4M3 20h8" fill="none" stroke="#111" strokeWidth="1.300" /></svg></Slot>
        <Slot $w={26}><svg width="20" height="14" viewBox="0 0 20 14" fill="#111"><rect x="7" y="3" width="12" height="9" stroke="#111" /><path d="M1 3l2-2 3 3-2 2zM3 6l4 2" stroke="#111" /></svg></Slot>
        <Slot $w={24}><TiltedWifi size={16} strokeWidth={1.3} /></Slot>
        <Slot $w={19}><Volume2 size={16} strokeWidth={1.2} /></Slot>
        <Lang>ESP</Lang>
        <Clock>7:22 p. m.<br />8/11/2022</Clock>
        <Slot $w={46}><MessageSquare size={18} strokeWidth={1.2} /></Slot>
      </Taskbar>
    </Screen>
  );
}
